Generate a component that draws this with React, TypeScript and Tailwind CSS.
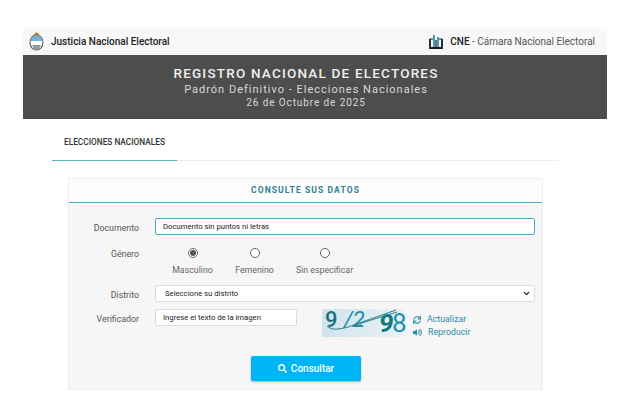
import { ChevronDown } from "lucide-react";
import { FaSearch, FaSync, FaVolumeUp } from "react-icons/fa";

function Escudo() {
  return (
    <svg width="15" height="19" viewBox="0 0 15 19" className="shrink-0">
      <path d="M7.5 0.5 C5.5 0.5 5 2.5 5.3 4 L9.7 4 C10 2.5 9.5 0.5 7.5 0.5Z" fill="#b98a3c" />
      <ellipse cx="7.5" cy="10.5" rx="6.5" ry="7.5" fill="#fff" stroke="#6b5a3a" strokeWidth="1.1" />
      <path d="M1.6 9 C1.6 5.5 4.5 3.6 7.5 3.6 C10.5 3.6 13.4 5.5 13.4 9Z" fill="#6fb3dc" />
      <path d="M3 13 L12 13 L9.5 17.4 L5.5 17.4Z" fill="#8a9aa5" />
    </svg>
  );
}

function CneLogo() {
  return (
    <svg width="14" height="15" viewBox="0 0 14 15" className="shrink-0">
      <path d="M1 5 V14 H13 V5" fill="none" stroke="#1a1a1a" strokeWidth="1.8" />
      <path d="M1 5 H4 M10 5 H13" stroke="#1a1a1a" strokeWidth="1.2" fill="none" />
      <path d="M5 13 V1 M9 13 V3" stroke="#2a8cb5" strokeWidth="1.7" fill="none" />
      <path d="M7 6 V13" stroke="#1a1a1a" strokeWidth="1.2" fill="none" />
    </svg>
  );
}

function Captcha() {
  return (
    <svg width="84" height="28" viewBox="0 0 84 28" className="shrink-0 overflow-visible bg-gradient-to-r from-[#cfe3ec] to-[#eaf3f6]">
      <text x="3" y="18" fontFamily="Roboto, sans-serif" fontSize="22" fontWeight="500" fill="#1b6f7c">9</text>
      <text x="22" y="18" fontFamily="Roboto, sans-serif" fontSize="22" fontStyle="italic" fill="#1f8fb0">/2</text>
      <text x="57" y="23" fontFamily="Roboto, sans-serif" fontSize="26" fontWeight="700" fontStyle="italic" fill="#0f7a7c">9</text>
      <text x="70" y="23" fontFamily="Roboto, sans-serif" fontSize="26" fill="#1f8fb0">8</text>
      <path d="M5 17 C10 22 18 20 26 18 L74 1 M30 17 L75 3 M30 17 L40 16" fill="none" stroke="#2a7f8f" strokeWidth="1" />
    </svg>
  );
}

const labelClass = "w-[70px] h-[17px] text-right text-[8.8px] text-[#555555]";
const fieldClass = "bg-white rounded-[2px] border border-[#dddddd] text-[7.7px] text-[#222222] flex items-center";

function Radio({ checked, label, width }: { checked?: boolean; label: string; width: string }) {
  return (
    <div className={`flex flex-col items-center gap-[6px] ${width}`}>
      <span className="w-[10px] h-[10px] rounded-full border border-[#666666] bg-white flex items-center justify-center">
        {checked && <span className="w-[6px] h-[6px] rounded-full bg-[#555555]" />}
      </span>
      <span className="text-[8.8px] leading-[12px] text-[#666666] whitespace-nowrap">{label}</span>
    </div>
  );
}

export default function App() {
  return (
    <div className="w-[630px] h-[420px] overflow-hidden bg-white pt-[28px] font-['Roboto',sans-serif]">
      {/* Top bar */}
      <div className="mx-[23px] h-[27px] bg-[#f8f8f8] flex items-center justify-between pl-[6px] pr-[12px]">
        <div className="flex items-center gap-[7px]">
          <Escudo />
          <span className="text-[10px] font-medium text-[#222222]">Justicia Nacional Electoral</span>
        </div>
        <div className="flex items-center gap-[7px]">
          <CneLogo />
          <span className="text-[10px] text-[#555555]">
            <span className="font-medium text-[#222222]">CNE</span> - Cámara Nacional Electoral
          </span>
        </div>
      </div>

      {/* Banner */}
      <div className="mx-[23px] h-[64px] bg-[#4d4d4d] flex flex-col items-center pt-[9px] pr-[18px] text-center">
        <div className="text-[13.5px] leading-[18px] font-medium tracking-[1.2px] text-[#f0f0f0]">REGISTRO NACIONAL DE ELECTORES</div>
        <div className="text-[11px] leading-[15px] tracking-[1px] text-[#d8d8d8]">Padrón Definitivo - Elecciones Nacionales</div>
        <div className="text-[10px] leading-[12px] tracking-[0.9px] text-[#d8d8d8]">26 de Octubre de 2025</div>
      </div>

      {/* Tabs */}
      <div className="mx-[52px] mr-[71px] h-[42px] border-b border-[#eeeeee] flex">
        <div className="w-[125px] h-[42px] border-b border-[#5db5c4] pl-[12px] pt-[17px] text-[8.3px] leading-[12px] font-medium text-[#333333]">
          ELECCIONES NACIONALES
        </div>
      </div>

      {/* Card */}
      <div className="mt-[17px] ml-[68px] w-[475px] h-[212px] border border-[#eeeeee] bg-[#f6f6f6]">
        <div className="h-[24px] bg-[#fdfdfd] border-b border-[#4aa8bd] flex items-center justify-center text-[8.5px] font-bold tracking-[1.1px] text-[#2f7f90]">
          CONSULTE SUS DATOS
        </div>
        <div className="pt-[15px]">
          <div className="flex gap-[16px]">
            <div className={`${labelClass} leading-[20px]`}>Documento</div>
            <div className={`${fieldClass} w-[380px] h-[17px] pl-[7px] !border-[#4aa8bd]`}>Documento sin puntos ni letras</div>
          </div>

          <div className="flex mt-[13px]">
            <div className={`${labelClass} leading-[13px]`}>Género</div>
            <div className="flex ml-[16px] pl-[17px]">
              <Radio checked label="Masculino" width="w-[41px]" />
              <div className="ml-[22px]"><Radio label="Femenino" width="w-[39px]" /></div>
              <div className="ml-[22px]"><Radio label="Sin especificar" width="w-[57px]" /></div>
            </div>
          </div>

          <div className="flex gap-[16px] mt-[9px]">
            <div className={`${labelClass} leading-[21px]`}>Distrito</div>
            <div className={`${fieldClass} w-[380px] h-[17px] pl-[9px] pr-[3px] justify-between`}>
              <span>Seleccione su distrito</span>
              <ChevronDown size={9} strokeWidth={3.5} className="text-[#222222]" />
            </div>
          </div>

          <div className="flex gap-[16px] mt-[7px]">
            <div className={`${labelClass} leading-[21px]`}>Verificador</div>
            <div className={`${fieldClass} w-[142px] h-[17px] pl-[7px]`}>Ingrese el texto de la imagen</div>
            <div className="ml-[9px]"><Captcha /></div>
            <div className="ml-[-9px] flex flex-col gap-[2px] pt-[5px] text-[8.8px] leading-[11px] text-[#2a8cab]">
              <div className="flex items-center gap-[6px]"><FaSync size={8} />Actualizar</div>
              <div className="flex items-center gap-[6px]"><FaVolumeUp size={9} />Reproducir</div>
            </div>
          </div>

          <div className="flex justify-center mt-[18px] pl-[1px]">
            <div className="w-[110px] h-[25px] bg-[#00b5f5] rounded-[2px] shadow-[0_1px_2px_rgba(0,0,0,0.3)] flex items-center justify-center gap-[4px] text-[10px] font-medium text-white">
              <FaSearch size={9} />
              Consultar
            </div>
          </div>
        </div>
      </div>
    </div>
  );
}
